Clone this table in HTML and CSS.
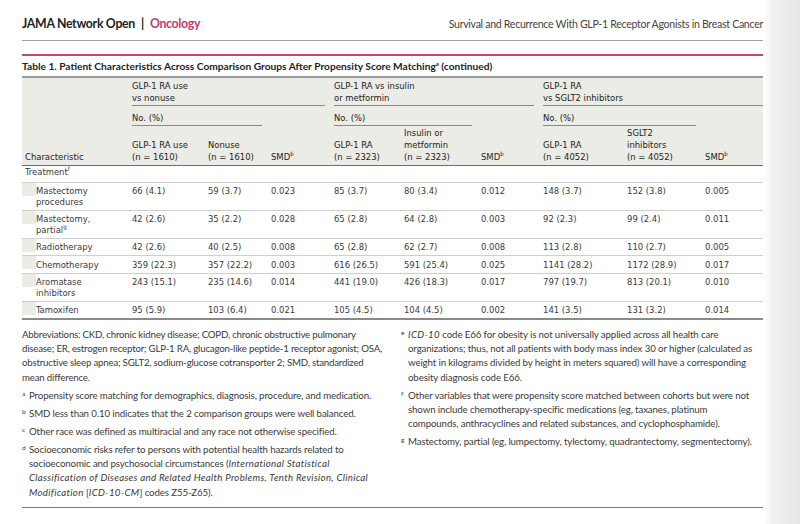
FILE: index.html
```html
<!DOCTYPE html>
<html>
<head>
<meta charset="utf-8">
<link rel="stylesheet" href="styles.css">
</head>
<body>
<div class="page">
  <header class="top">
    <div class="brand"><span class="journal">JAMA Network Open</span><span class="sep">|</span><span class="section">Oncology</span></div>
    <div class="running">Survival and Recurrence With GLP-1 Receptor Agonists in Breast Cancer</div>
  </header>
  <div class="pink-rule"></div>
  <div class="caption">Table 1. Patient Characteristics Across Comparison Groups After Propensity Score Matching<sup>a</sup> (continued)</div>
  <table class="data">
    <colgroup>
      <col class="c0"><col class="c1"><col class="c2"><col class="c3"><col class="c4"><col class="c5"><col class="c6"><col class="c7"><col class="c8"><col class="c9">
    </colgroup>
    <thead>
      <tr class="grp">
        <th class="char" rowspan="3">Characteristic</th>
        <th colspan="3"><div class="gl">GLP-1 RA use<br>vs nonuse</div></th>
        <th colspan="3"><div class="gl">GLP-1 RA vs insulin<br>or metformin</div></th>
        <th colspan="3"><div class="gl end">GLP-1 RA<br>vs SGLT2 inhibitors</div></th>
      </tr>
      <tr class="no">
        <th colspan="2"><div class="sl">No. (%)</div></th><th></th>
        <th colspan="2"><div class="sl">No. (%)</div></th><th></th>
        <th colspan="2"><div class="sl">No. (%)</div></th><th></th>
      </tr>
      <tr class="cols">
        <th>GLP-1 RA use<br>(n = 1610)</th><th>Nonuse<br>(n = 1610)</th><th>SMD<sup>b</sup></th>
        <th>GLP-1 RA<br>(n = 2323)</th><th>Insulin or<br>metformin<br>(n = 2323)</th><th>SMD<sup>b</sup></th>
        <th>GLP-1 RA<br>(n = 4052)</th><th>SGLT2<br>inhibitors<br>(n = 4052)</th><th>SMD<sup>b</sup></th>
      </tr>
    </thead>
    <tbody>
      <tr class="cat"><td class="lbl">Treatment<sup>f</sup></td><td></td><td></td><td></td><td></td><td></td><td></td><td></td><td></td><td></td></tr>
      <tr><td class="lbl sub">Mastectomy<br>procedures</td><td>66 (4.1)</td><td>59 (3.7)</td><td>0.023</td><td>85 (3.7)</td><td>80 (3.4)</td><td>0.012</td><td>148 (3.7)</td><td>152 (3.8)</td><td>0.005</td></tr>
      <tr><td class="lbl sub">Mastectomy,<br>partial<sup>g</sup></td><td>42 (2.6)</td><td>35 (2.2)</td><td>0.028</td><td>65 (2.8)</td><td>64 (2.8)</td><td>0.003</td><td>92 (2.3)</td><td>99 (2.4)</td><td>0.011</td></tr>
      <tr><td class="lbl sub">Radiotherapy</td><td>42 (2.6)</td><td>40 (2.5)</td><td>0.008</td><td>65 (2.8)</td><td>62 (2.7)</td><td>0.008</td><td>113 (2.8)</td><td>110 (2.7)</td><td>0.005</td></tr>
      <tr><td class="lbl sub">Chemotherapy</td><td>359 (22.3)</td><td>357 (22.2)</td><td>0.003</td><td>616 (26.5)</td><td>591 (25.4)</td><td>0.025</td><td>1141 (28.2)</td><td>1172 (28.9)</td><td>0.017</td></tr>
      <tr><td class="lbl sub">Aromatase<br>inhibitors</td><td>243 (15.1)</td><td>235 (14.6)</td><td>0.014</td><td>441 (19.0)</td><td>426 (18.3)</td><td>0.017</td><td>797 (19.7)</td><td>813 (20.1)</td><td>0.010</td></tr>
      <tr class="last"><td class="lbl sub">Tamoxifen</td><td>95 (5.9)</td><td>103 (6.4)</td><td>0.021</td><td>105 (4.5)</td><td>104 (4.5)</td><td>0.002</td><td>141 (3.5)</td><td>131 (3.2)</td><td>0.014</td></tr>
    </tbody>
  </table>
  <div class="notes">
    <div class="ncol left">
      <p class="abbr">Abbreviations: CKD, chronic kidney disease; COPD, chronic obstructive pulmonary disease; ER, estrogen receptor; GLP-1 RA, glucagon-like peptide-1 receptor agonist; OSA, obstructive sleep apnea; SGLT2, sodium-glucose cotransporter 2; SMD, standardized mean difference.</p>
      <p class="fn"><span class="mk">a</span>Propensity score matching for demographics, diagnosis, procedure, and medication.</p>
      <p class="fn"><span class="mk">b</span>SMD less than 0.10 indicates that the 2 comparison groups were well balanced.</p>
      <p class="fn"><span class="mk">c</span>Other race was defined as multiracial and any race not otherwise specified.</p>
      <p class="fn"><span class="mk">d</span>Socioeconomic risks refer to persons with potential health hazards related to socioeconomic and psychosocial circumstances (<i>International Statistical Classification of Diseases and Related Health Problems, Tenth Revision, Clinical Modification</i> [<i>ICD-10-CM</i>] codes Z55-Z65).</p>
    </div>
    <div class="ncol right">
      <p class="fn"><span class="mk">e</span><i>ICD-10</i> code E66 for obesity is not universally applied across all health care organizations; thus, not all patients with body mass index 30 or higher (calculated as weight in kilograms divided by height in meters squared) will have a corresponding obesity diagnosis code E66.</p>
      <p class="fn"><span class="mk">f</span>Other variables that were propensity score matched between cohorts but were not shown include chemotherapy-specific medications (eg, taxanes, platinum compounds, anthracyclines and related substances, and cyclophosphamide).</p>
      <p class="fn"><span class="mk">g</span>Mastectomy, partial (eg, lumpectomy, tylectomy, quadrantectomy, segmentectomy).</p>
    </div>
  </div>
</div>
</body>
</html>
```

FILE: styles.css
```css
html, body {
  margin: 0;
  padding: 0;
}
body {
  width: 800px;
  height: 524px;
  overflow: hidden;
  background: linear-gradient(to right, #ffffff 0, #ffffff 764px, #f1f1f1 772px, #e6e6e6 800px);
  font-family: Lato, "Open Sans", sans-serif;
  color: #333;
}
.page {
  margin-left: 22px;
  width: 741px;
}
.top {
  display: flex;
  justify-content: space-between;
  align-items: baseline;
  padding-top: 16px;
  padding-bottom: 8px;
  line-height: 16px;
  border-bottom: 1px solid #a4a4a4;
}
.brand {
  font-size: 12.3px;
  font-weight: 700;
  letter-spacing: -0.3px;
  color: #222;
}
.sep {
  margin: 0 6px;
}
.section {
  color: #bb3f70;
}
.running {
  font-size: 10.6px;
  letter-spacing: -0.3px;
  color: #444;
}
.pink-rule {
  margin-top: 13px;
  height: 2px;
  background: #c4476f;
}
.caption {
  margin-top: 4px;
  line-height: 13px;
  font-size: 10.2px;
  font-weight: 700;
  color: #222;
  padding-bottom: 3px;
}
.caption sup {
  font-size: 6px;
  line-height: 0;
  vertical-align: 4px;
}
.data {
  width: 741px;
  border-collapse: collapse;
  table-layout: fixed;
  border-top: 2px solid #9a9a9a;
  border-bottom: 2px solid #8a8a8a;
  font-family: "DejaVu Sans Condensed", "DejaVu Sans", sans-serif;
  font-size: 9.4px;
  color: #3a3a3a;
}
.c0 { width: 110px; }
.c1 { width: 76px; }
.c2 { width: 63px; }
.c3 { width: 63px; }
.c4 { width: 70px; }
.c5 { width: 77px; }
.c6 { width: 62px; }
.c7 { width: 84px; }
.c8 { width: 78px; }
.c9 { width: 58px; }
.data thead {
  background: #ecece6;
}
.data th {
  padding: 0;
  text-align: left;
  font-weight: normal;
  color: #222;
  line-height: 12px;
  vertical-align: bottom;
}
.data th.char {
  padding-left: 3px;
  padding-bottom: 2px;
  border-bottom: 1.5px solid #6f6f6f;
}
.gl {
  padding: 2px 0 1px;
  border-bottom: 1px solid #8a8a8a;
  margin-right: 9px;
}
.gl.end {
  margin-right: 0;
}
.sl {
  padding: 6px 0 1px;
  border-bottom: 1px solid #8a8a8a;
  margin-right: 9px;
}
.cols th {
  padding: 1px 0 2px;
  border-bottom: 1.5px solid #6f6f6f;
}
.data sup {
  font-size: 6px;
  line-height: 0;
  vertical-align: 4px;
}
.data td {
  padding: 3.5px 0 2.5px;
  line-height: 10.5px;
  height: 10.5px;
  vertical-align: top;
  white-space: nowrap;
}
.data tbody tr {
  border-bottom: 1px solid #cfcfcf;
}
.data tbody tr.last {
  border-bottom: none;
}
.data tr.cat td {
  padding: 1px 0 4px;
}
.lbl {
  padding-left: 3px !important;
}
.lbl.sub {
  padding-left: 14px !important;
  background: linear-gradient(#ecece6, #ecece6) no-repeat 0 0 / 14px 13px;
}
.notes {
  display: grid;
  grid-template-columns: 364px 356px;
  column-gap: 15px;
  padding-top: 7px;
  padding-bottom: 4px;
  border-bottom: 1px solid #7a7a7a;
  font-size: 9.7px;
  letter-spacing: -0.12px;
  line-height: 14.2px;
  color: #3a3a3a;
}
.notes .abbr {
  letter-spacing: -0.2px;
}
.notes i {
  letter-spacing: 0.3px;
}
.notes p {
  margin: 0 0 3.9px;
}
.fn {
  padding-left: 7px;
}
.mk {
  display: inline-block;
  width: 7px;
  margin-left: -7px;
  font-size: 6.5px;
  line-height: 0;
  vertical-align: 3px;
}
```
